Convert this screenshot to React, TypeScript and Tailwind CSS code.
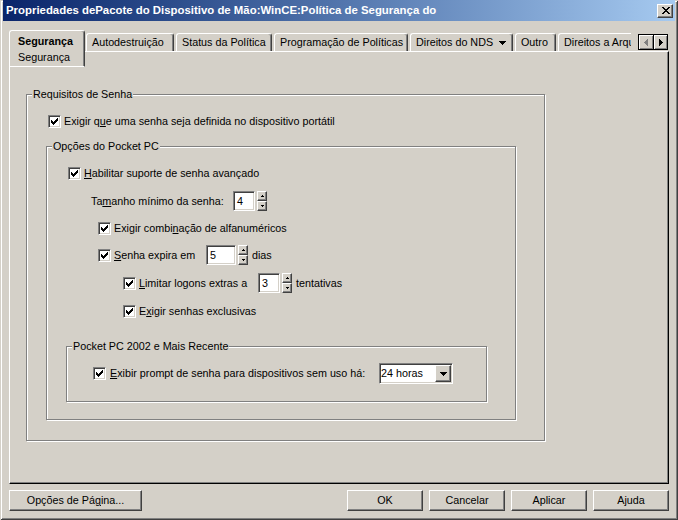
import React from "react";

const CHECK = ["......x", ".....xx", "x...xxx", "xx.xxx.", "xxxxx..", ".xxx...", "..x...."];
const CLOSE = ["xx....xx", ".xx..xx.", "..xxxx..", "...xx...", "..xxxx..", ".xx..xx.", "xx....xx"];
const DOWN = ["xxxxxxx", ".xxxxx.", "..xxx..", "...x..."];
const RIGHT = ["x...", "xx..", "xxx.", "xxxx", "xxx.", "xx..", "x..."];
const LEFT = ["...x", "..xx", ".xxx", "xxxx", ".xxx", "..xx", "...x"];

const Pixels = ({ rows, color = "#000" }: { rows: string[]; color?: string }) => (
  <svg width={rows[0].length} height={rows.length} shapeRendering="crispEdges" className="block">
    {rows.flatMap((r, y) =>
      r.split("").map((c, x) =>
        c === "x" ? <rect key={`${x}-${y}`} x={x} y={y} width={1} height={1} fill={color} /> : null
      )
    )}
  </svg>
);

const sunken =
  "border border-t-[#808080] border-l-[#808080] border-r-white border-b-white shadow-[inset_1px_1px_0_#404040,inset_-1px_-1px_0_#d4d0c8]";
const raised =
  "border border-t-white border-l-white border-r-[#404040] border-b-[#404040] shadow-[inset_-1px_-1px_0_#808080]";

const CheckBox = () => (
  <span className={`w-[13px] h-[13px] shrink-0 bg-white flex items-center justify-center ${sunken}`}>
    <Pixels rows={CHECK} />
  </span>
);

const Check = ({ className = "", children }: { className?: string; children: React.ReactNode }) => (
  <div className={`flex items-center gap-[3px] h-[13px] ${className}`}>
    <CheckBox />
    <span className="whitespace-nowrap leading-[13px]">{children}</span>
  </div>
);

const SpinBtn = ({ up }: { up?: boolean }) => (
  <div className={`w-[10px] h-[10px] bg-[#d4d0c8] flex items-center justify-center ${raised}`}>
    <Pixels rows={up ? [".x.", "xxx"] : ["xxx", ".x."]} />
  </div>
);

const Spinner = ({ value, w }: { value: string; w: string }) => (
  <div className="flex items-center shrink-0">
    <div className={`${w} h-[20px] bg-white flex items-center pl-[3px] ${sunken}`}>{value}</div>
    <div className="flex flex-col ml-[2px]">
      <SpinBtn up />
      <SpinBtn />
    </div>
  </div>
);

const Group = ({ label, className, children }: { label: string; className: string; children: React.ReactNode }) => (
  <div className={`border border-[#808080] shadow-[inset_1px_1px_0_#fff,1px_1px_0_#fff] flex flex-col ${className}`}>
    <div className="-mt-[7px] ml-[5px] px-[1px] w-fit bg-[#d4d0c8] leading-[13px] whitespace-nowrap">{label}</div>
    {children}
  </div>
);

const Tab = ({ w, first, children }: { w: string; first?: boolean; children: React.ReactNode }) => (
  <div
    className={`${w} ${first ? "ml-[1px]" : "ml-[2px]"} h-[18px] shrink-0 flex items-center pl-[5px] bg-[#d4d0c8] border-t border-l border-r border-t-white border-l-white border-r-[#404040] shadow-[inset_-1px_0_0_#808080] rounded-t-[3px] whitespace-nowrap overflow-hidden`}
  >
    {children}
  </div>
);

const Button = ({ className, children }: { className: string; children: React.ReactNode }) => (
  <button className={`h-[21px] bg-[#d4d0c8] flex items-center justify-center ${raised} ${className}`}>{children}</button>
);

export default function App() {
  return (
    <div className="w-[678px] h-[520px] bg-[#d4d0c8] flex flex-col px-[3px] pb-[3px] text-[10.75px] text-black font-['Liberation_Sans',Arial,sans-serif] shadow-[inset_1px_1px_0_#d4d0c8,inset_-1px_-1px_0_#404040,inset_2px_2px_0_#fff,inset_-2px_-2px_0_#808080] overflow-hidden">
      {/* title bar */}
      <div className="h-[21px] shrink-0 flex items-center justify-between pl-[3px] pr-[2px] bg-linear-to-r from-[#0a246a] to-[#a6caf0]">
        <span className="text-white font-bold text-[11.4px] whitespace-nowrap">
          Propriedades dePacote do Dispositivo de Mão:WinCE:Política de Segurança do
        </span>
        <div className={`w-[16px] h-[14px] bg-[#d4d0c8] flex items-center justify-center pl-[1px] ${raised}`}>
          <Pixels rows={CLOSE} />
        </div>
      </div>

      {/* tabs */}
      <div className="mt-[9px] ml-[6px] flex items-end">
        <div className="w-[76px] h-[37px] -mb-[16px] relative z-10 shrink-0 bg-[#d4d0c8] border-t border-l border-r border-b border-t-white border-l-white border-b-white border-r-[#404040] shadow-[inset_-1px_0_0_#808080] rounded-t-[3px] flex flex-col pl-[8px] pt-[4px] leading-[13px]">
          <span className="font-bold">Segurança</span>
          <span className="mt-[3px]">Segurança</span>
        </div>
        <div className="w-[546px] h-[21px] overflow-hidden flex items-end shrink-0">
          <Tab w="w-[88px]" first>Autodestruição</Tab>
          <Tab w="w-[96px]">Status da Política</Tab>
          <Tab w="w-[134px]">Programação de Políticas</Tab>
          <Tab w="w-[103px]">
            Direitos do NDS
            <span className="ml-auto mr-[6px]">
              <Pixels rows={DOWN} />
            </span>
          </Tab>
          <Tab w="w-[41px]">Outro</Tab>
          <Tab w="w-[110px]">Direitos a Arquivos</Tab>
        </div>
        <div className="ml-[7px] mb-[1px] h-[16px] flex border border-black">
          <div className="w-[14px] h-full flex items-center justify-center shadow-[inset_1px_1px_0_#fff,inset_-1px_-1px_0_#808080]">
            <Pixels rows={LEFT} color="#808080" />
          </div>
          <div className="w-[14px] h-full flex items-center justify-center border-l border-black shadow-[inset_1px_1px_0_#fff,inset_-1px_-1px_0_#808080]">
            <Pixels rows={RIGHT} />
          </div>
        </div>
      </div>

      {/* tab page */}
      <div className="mx-[6px] h-[433px] shrink-0 border border-t-white border-l-white border-r-black border-b-black shadow-[inset_-1px_-1px_0_#808080]">
        <Group label="Requisitos de Senha" className="ml-[16px] mt-[42px] w-[519px] h-[347px]">
          <Check className="mt-[14px] ml-[21px]">
            Exigir q<span className="underline">u</span>e uma senha seja definida no dispositivo portátil
          </Check>
          <Group label="Opções do Pocket PC" className="mt-[18px] ml-[19px] w-[470px] h-[274px]">
            <Check className="mt-[14px] ml-[21px]">
              <span className="underline">H</span>abilitar suporte de senha avançado
            </Check>
            <div className="mt-[11px] ml-[44px] h-[20px] flex items-center">
              <span className="w-[142px] shrink-0 whitespace-nowrap">
                Ta<span className="underline">m</span>anho mínimo da senha:
              </span>
              <Spinner value="4" w="w-[22px]" />
            </div>
            <Check className="mt-[11px] ml-[51px]">
              Exigir combi<span className="underline">n</span>ação de alfanuméricos
            </Check>
            <div className="mt-[10px] ml-[51px] h-[20px] flex items-center">
              <CheckBox />
              <span className="ml-[3px] w-[92px] shrink-0 whitespace-nowrap">
                <span className="underline">S</span>enha expira em
              </span>
              <Spinner value="5" w="w-[30px]" />
              <span className="ml-[4px]">dias</span>
            </div>
            <div className="mt-[8px] ml-[76px] h-[20px] flex items-center">
              <CheckBox />
              <span className="ml-[3px] w-[119px] shrink-0 whitespace-nowrap">
                <span className="underline">L</span>imitar logons extras a
              </span>
              <Spinner value="3" w="w-[22px]" />
              <span className="ml-[4px]">tentativas</span>
            </div>
            <Check className="mt-[12px] ml-[76px]">
              E<span className="underline">x</span>igir senhas exclusivas
            </Check>
            <Group label="Pocket PC 2002 e Mais Recente" className="mt-[28px] ml-[19px] w-[421px] h-[56px]">
              <div className="mt-[10px] ml-[26px] h-[21px] flex items-center">
                <CheckBox />
                <span className="ml-[4px] w-[269px] shrink-0 whitespace-nowrap">
                  <span className="underline">E</span>xibir prompt de senha para dispositivos sem uso há:
                </span>
                <div className={`w-[74px] h-[21px] bg-white flex items-center py-[1px] pr-[1px] ${sunken}`}>
                  <span className="flex-1 pl-[1px]">24 horas</span>
                  <div className={`w-[16px] h-full bg-[#d4d0c8] flex items-center justify-center ${raised}`}>
                    <Pixels rows={DOWN} />
                  </div>
                </div>
              </div>
            </Group>
          </Group>
        </Group>
      </div>

      {/* buttons */}
      <div className="mt-[6px] mx-[6px] flex justify-between">
        <Button className="w-[133px]">
          Opções de Pá<span className="underline">g</span>ina...
        </Button>
        <div className="flex gap-[6px]">
          <Button className="w-[76px]">OK</Button>
          <Button className="w-[76px]">Cancelar</Button>
          <Button className="w-[76px]">Aplicar</Button>
          <Button className="w-[76px]">Ajuda</Button>
        </div>
      </div>
    </div>
  );
}
